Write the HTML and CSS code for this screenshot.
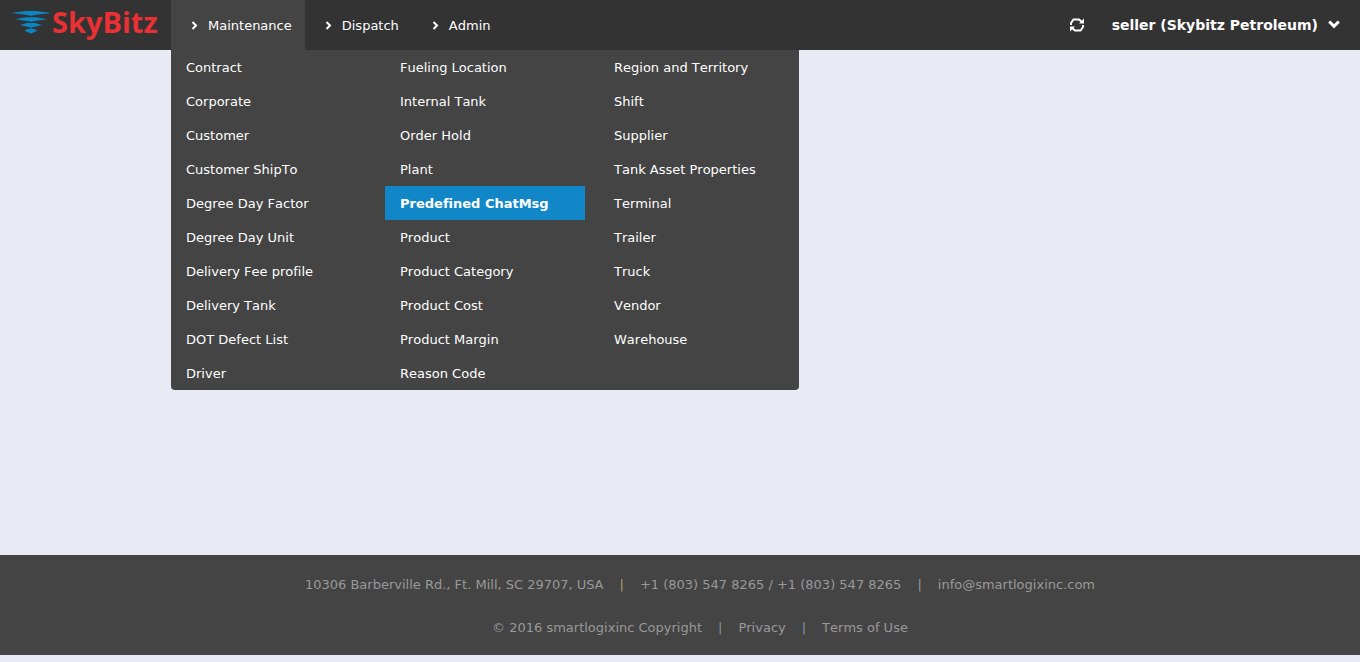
FILE: index.html
```html
<!DOCTYPE html>
<html lang="en">
<head>
<meta charset="utf-8">
<title>SkyBitz</title>
<link rel="stylesheet" href="styles.css">
</head>
<body>
<header class="topbar">
  <a class="logo" href="#">
    <svg class="logo-mark" width="41" height="24" viewBox="0 0 41 24" aria-hidden="true">
      <g fill="#0a86c4">
        <path d="M0 3L15 1H25L41 3L27 4.500L20 5.800L13 4.500z"/>
        <path d="M4 9.200L15 7.200H25L36 9.200L26 10.800L20 11.800L14 10.800z"/>
        <path d="M9 15L16 13H24L31 15L25 16.600L20 17.600L15 16.600z"/>
        <path d="M13.500 20.700L17 19L20 18.300L23 19L26.500 20.700L20 23.500z"/>
      </g>
    </svg>
    <span class="logo-text">SkyBitz</span>
  </a>
  <nav class="nav">
    <div class="nav-item">
      <button class="nav-button active" type="button" aria-expanded="true">
        <svg class="chevron" width="7" height="9" viewBox="0 0 7 9"><path d="M1.500 1L5 4.500L1.500 8"/></svg>Maintenance
      </button>
      <div class="menu">
        <div class="menu-column">
          <a href="#">Contract</a>
          <a href="#">Corporate</a>
          <a href="#">Customer</a>
          <a href="#">Customer ShipTo</a>
          <a href="#">Degree Day Factor</a>
          <a href="#">Degree Day Unit</a>
          <a href="#">Delivery Fee profile</a>
          <a href="#">Delivery Tank</a>
          <a href="#">DOT Defect List</a>
          <a href="#">Driver</a>
        </div>
        <div class="menu-column">
          <a href="#">Fueling Location</a>
          <a href="#">Internal Tank</a>
          <a href="#">Order Hold</a>
          <a href="#">Plant</a>
          <a class="selected" href="#">Predefined ChatMsg</a>
          <a href="#">Product</a>
          <a href="#">Product Category</a>
          <a href="#">Product Cost</a>
          <a href="#">Product Margin</a>
          <a href="#">Reason Code</a>
        </div>
        <div class="menu-column">
          <a href="#">Region and Territory</a>
          <a href="#">Shift</a>
          <a href="#">Supplier</a>
          <a href="#">Tank Asset Properties</a>
          <a href="#">Terminal</a>
          <a href="#">Trailer</a>
          <a href="#">Truck</a>
          <a href="#">Vendor</a>
          <a href="#">Warehouse</a>
        </div>
      </div>
    </div>
    <div class="nav-item">
      <button class="nav-button" type="button">
        <svg class="chevron" width="7" height="9" viewBox="0 0 7 9"><path d="M1.500 1L5 4.500L1.500 8"/></svg>Dispatch
      </button>
    </div>
    <div class="nav-item">
      <button class="nav-button" type="button">
        <svg class="chevron" width="7" height="9" viewBox="0 0 7 9"><path d="M1.500 1L5 4.500L1.500 8"/></svg>Admin
      </button>
    </div>
  </nav>
  <div class="account">
    <button class="refresh" type="button" aria-label="Refresh">
      <svg width="14" height="14" viewBox="0 0 14 14" aria-hidden="true">
        <path class="arc" d="M1 7V5L3.500 1.500H9L12 4M13 7V9L10.500 12.500H5L2 10"/>
        <path class="tip" d="M14 .5V5.500H9zM0 13.500V8.500H5z"/>
      </svg>
    </button>
    <button class="user" type="button">seller (Skybitz Petroleum)
      <svg class="caret" width="12" height="9" viewBox="0 0 12 9" aria-hidden="true"><path d="M1.200 1.500L6 6.300L10.800 1.500"/></svg>
    </button>
  </div>
</header>
<main class="content"></main>
<footer class="footer">
  <div class="footer-row">
    <span>10306 Barberville Rd., Ft. Mill, SC 29707, USA</span>
    <span class="warm">|</span>
    <span>+1 (803) 547 8265 / +1 (803) 547 8265</span>
    <span>|</span>
    <a href="#">info@smartlogixinc.com</a>
  </div>
  <div class="footer-row">
    <span>© 2016 smartlogixinc Copyright</span>
    <span class="cool">|</span>
    <a href="#">Privacy</a>
    <span class="cool">|</span>
    <a href="#">Terms of Use</a>
  </div>
</footer>
</body>
</html>
```

FILE: styles.css
```css
* {
  box-sizing: border-box;
}

body {
  margin: 0;
  min-height: 100vh;
  padding-bottom: 7px;
  display: flex;
  flex-direction: column;
  background: #e8ebf4;
  color: #fff;
  font: 13px/18px Verdana, "DejaVu Sans", sans-serif;
  font-kerning: none;
  font-variant-ligatures: none;
}

a {
  color: inherit;
  text-decoration: none;
}

button {
  border: 0;
  padding: 0;
  background: none;
  color: inherit;
  font: inherit;
  font-kerning: none;
  cursor: pointer;
}

.topbar {
  display: flex;
  height: 50px;
  background: #333;
}

.logo {
  display: flex;
  align-items: center;
  width: 171px;
  padding-left: 11px;
}

.logo-text {
  color: #e93034;
  font: bold 29px/44px "Open Sans", sans-serif;
  padding-bottom: 6px;
}

.logo-mark {
  flex: none;
  margin-bottom: 6px;
}

.nav {
  display: flex;
}

.nav-item {
  position: relative;
}

.nav-button {
  display: flex;
  align-items: center;
  gap: 10px;
  height: 50px;
  padding: 2px 13px 0 20px;
}

.active {
  background: #444;
}

.chevron,
.caret {
  fill: none;
  stroke: #fff;
  stroke-width: 2;
}

.chevron {
  margin-bottom: 2px;
}

.menu {
  position: absolute;
  top: 100%;
  left: 0;
  display: flex;
  gap: 14px;
  background: #444;
  border-radius: 0 0 4px 4px;
}

.menu-column {
  width: 200px;
}

.menu-column a {
  display: block;
  padding: 9px 15px 7px;
}

.menu-column .selected {
  background: #1287c8;
  font-weight: bold;
}

.account {
  display: flex;
  align-items: center;
  gap: 28px;
  margin-left: auto;
  padding-right: 20px;
}

.refresh {
  display: flex;
}

.refresh .arc {
  fill: none;
  stroke: #fff;
  stroke-width: 2;
}

.refresh .tip {
  fill: #fff;
}

.user {
  display: flex;
  align-items: center;
  gap: 10px;
  font-size: 14px;
  font-weight: bold;
}

.caret {
  stroke-width: 3;
  margin-bottom: 2px;
}

.content {
  flex: 1;
}

.footer {
  display: flex;
  flex-direction: column;
  gap: 25px;
  padding: 21px 0 18px 40px;
  background: #444;
  color: #999;
}

.footer-row {
  display: flex;
  justify-content: center;
  gap: 16px;
}

.warm {
  color: #b39b78;
}

.cool {
  color: #8097a8;
}
```
